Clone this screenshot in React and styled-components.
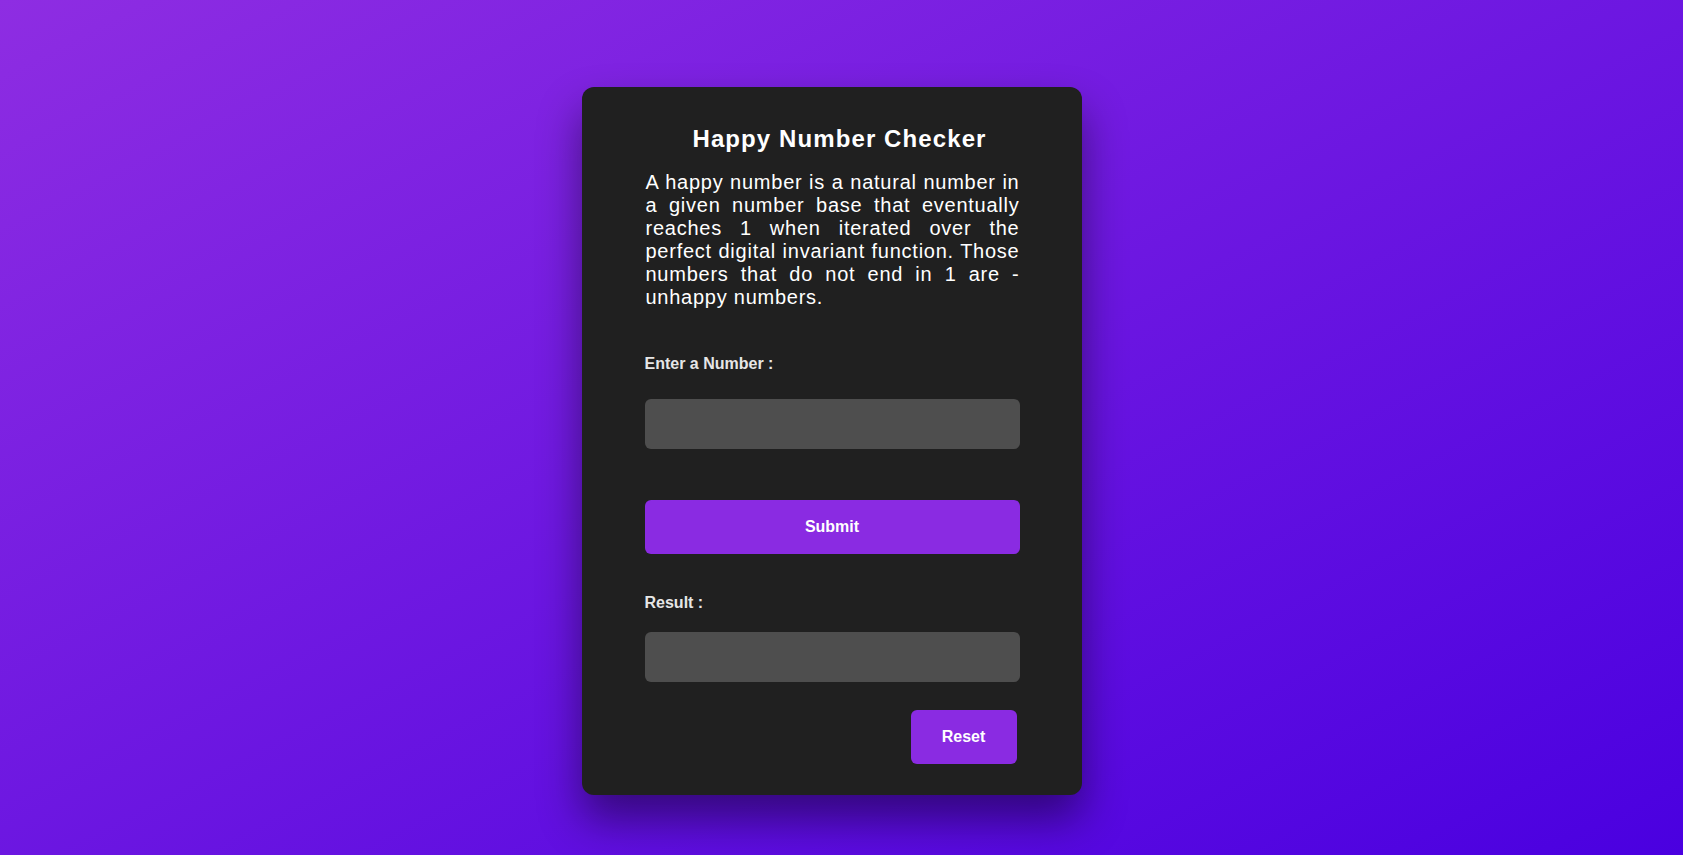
import styled, { createGlobalStyle } from 'styled-components';

const GlobalStyle = createGlobalStyle`
	html, body {
		margin: 0;
		padding: 0;
		height: 100%;
	}

	body {
		font-family: "Liberation Sans", Arial, sans-serif;
		background: linear-gradient(to bottom right, #8e2de2, #4a00e0);
		background-attachment: fixed;
	}
`;

const Page = styled.main`
	min-height: 855px;
	box-sizing: border-box;
	display: flex;
	justify-content: center;
	align-items: flex-start;
	padding-top: 87px;
	padding-right: 19px;
`;

const Card = styled.section`
	width: 500px;
	box-sizing: border-box;
	background: #202020;
	border-radius: 12px;
	padding: 38px 0 31px;
	box-shadow: 0 24px 44px rgba(0, 0, 0, 0.45);
`;

const Content = styled.div`
	width: 375px;
	margin: 0 auto;
	display: flex;
	flex-direction: column;
`;

const Title = styled.h1`
	margin: 0;
	padding-left: 15px;
	font-size: 24px;
	letter-spacing: 1.1px;
	line-height: 27px;
	font-weight: 700;
	color: #fff;
	text-align: center;
`;

const Description = styled.p`
	margin: 19px 0 0;
	padding-left: 1px;
	font-size: 20px;
	letter-spacing: 0.75px;
	line-height: 23px;
	color: #fff;
	text-align: justify;
`;

const Label = styled.label`
	display: block;
	margin-top: ${p => p.$top}px;
	font-size: 16px;
	line-height: 18px;
	font-weight: 700;
	color: #e6e6e6;
`;

const Field = styled.input`
	display: block;
	box-sizing: border-box;
	width: 100%;
	height: 50px;
	margin-top: ${p => p.$top}px;
	border: none;
	border-radius: 6px;
	background: #4e4e4e;
	color: #fff;
	font: 18px "Liberation Sans", Arial, sans-serif;
	padding: 0 14px;
	outline: none;
`;

const Button = styled.button`
	height: 54px;
	border: none;
	border-radius: 6px;
	background: #8a2be2;
	color: #fff;
	font: 700 16px "Liberation Sans", Arial, sans-serif;
	cursor: pointer;
	width: ${p => (p.$wide ? '100%' : '106px')};
	margin-top: ${p => p.$top}px;
	align-self: ${p => (p.$wide ? 'stretch' : 'flex-end')};
	margin-right: ${p => (p.$wide ? 0 : 3)}px;
`;

function App() {
	return (
		<>
			<GlobalStyle />
			<Page>
				<Card>
					<Content>
						<Title>Happy Number Checker</Title>
						<Description>
							A happy number is a natural number in a given number base that eventually reaches 1 when iterated over the perfect digital invariant function. Those numbers that do not end in 1 are - unhappy numbers.
						</Description>
						<Label $top={46} htmlFor="num">Enter a Number :</Label>
						<Field $top={26} id="num" type="number" />
						<Button $wide $top={51}>Submit</Button>
						<Label $top={40} htmlFor="res">Result :</Label>
						<Field $top={20} id="res" readOnly />
						<Button $top={28}>Reset</Button>
					</Content>
				</Card>
			</Page>
		</>
	);
}

export default App;
